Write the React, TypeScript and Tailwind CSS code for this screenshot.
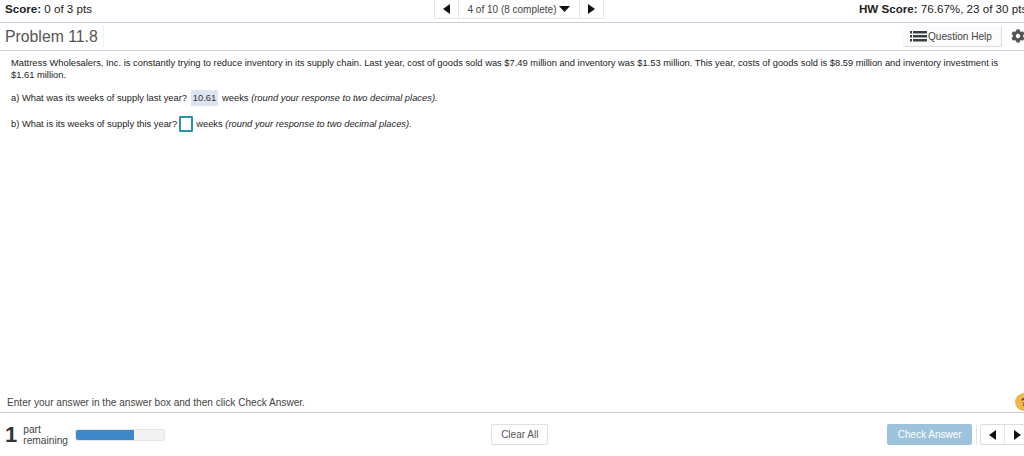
import { FaCog } from "react-icons/fa";

const font = { fontFamily: '"Liberation Sans", Arial, sans-serif' };

const Left = () => (
  <svg width="9" height="10" viewBox="0 0 9 10" className="block">
    <path d="M8 0v10L1 5z" fill="#111" />
  </svg>
);

const Right = () => (
  <svg width="9" height="10" viewBox="0 0 9 10" className="block">
    <path d="M1 0v10l7-5z" fill="#111" />
  </svg>
);

const ListIcon = () => (
  <svg width="17" height="11" viewBox="0 0 17 11" className="block shrink-0">
    <path
      d="M0 0h2v2.6H0zM3 0h14v2.6H3zM0 4h2v2.6H0zM3 4h14v2.6H3zM0 8h2v2.6H0zM3 8h14v2.6H3z"
      fill="#3a3f45"
    />
  </svg>
);

export default function App() {
  return (
    <div
      className="flex flex-col h-[456px] w-[1024px] overflow-hidden bg-white text-[#222]"
      style={font}
    >
      {/* top bar */}
      <div className="flex h-[23px] shrink-0 border-b border-[#c9d1de]">
        <div className="w-[434px] shrink-0 pl-[5px] pt-[2px] text-[11.6px] leading-[14px] text-[#222]">
          <b>Score:</b> 0 of 3 pts
        </div>
        <div className="flex h-[19px] w-[170px] shrink-0 rounded-b-[2px] border-x border-b border-[#e6e6e6]">
          <div className="flex w-[24px] items-center justify-center border-r border-[#e6e6e6]">
            <Left />
          </div>
          <div className="flex flex-1 items-center justify-center gap-[3px] whitespace-nowrap text-[10px] text-[#444]">
            4 of 10 (8 complete)
            <svg width="11" height="6" viewBox="0 0 11 6" className="block">
              <path d="M0 0h11L5.5 6z" fill="#111" />
            </svg>
          </div>
          <div className="flex w-[24px] items-center justify-center border-l border-[#e6e6e6]">
            <Right />
          </div>
        </div>
        <div className="ml-[255px] shrink-0 whitespace-nowrap pt-[2px] text-[11.6px] leading-[14px]">
          <b>HW Score:</b> 76.67%, 23 of 30 pts
        </div>
      </div>

      {/* problem title */}
      <div className="flex h-[28px] shrink-0 items-center border-b border-[#c9d1de]">
        <div className="flex h-full w-[104px] items-center border-r border-[#f3f3f3] pl-[5px] text-[15.8px] text-[#555]">
          Problem 11.8
        </div>
        <div className="ml-auto flex items-center">
          <div className="flex h-[21px] w-[99px] items-center gap-[1px] whitespace-nowrap rounded-[2px] border-r border-b border-[#dcdcdc] bg-[#fafafa] pl-[7px] pt-[1px] text-[10.1px] text-[#444]">
            <ListIcon />
            Question Help
          </div>
          <FaCog className="mb-[2px] ml-[9px] mr-[-1px] text-[14px] text-[#555]" />
        </div>
      </div>

      {/* question */}
      <div className="flex-1 pl-[11px] pr-[22px] pt-[6px] text-[9.35px] text-[#222]">
        <p className="leading-[12px]">
          Mattress Wholesalers, Inc. is constantly trying to reduce inventory in its supply chain. Last year, cost of goods sold was $7.49 million and inventory was $1.53 million. This year, costs of goods sold is $8.59 million and inventory investment is $1.61 million.
        </p>
        <div className="mt-[9px] flex h-[16px] items-center">
          a) What was its weeks of supply last year?
          <span className="mx-[4px] flex h-[16px] w-[27px] items-center justify-center bg-[#dce4f0] text-[#333]">10.61</span>
          weeks&nbsp;<i>(round your response to two decimal places).</i>
        </div>
        <div className="mt-[10px] flex h-[16px] items-center">
          b) What is its weeks of supply this year?
          <span className="ml-[2px] mr-[3px] h-[16px] w-[14px] rounded-[1px] border-2 border-[#2f8fb0]" />
          weeks&nbsp;<i>(round your response to two decimal places).</i>
        </div>
      </div>

      {/* hint */}
      <div className="relative flex h-[23px] shrink-0 items-center border-b border-[#c9ccd4] pl-[7px] pt-[3px] text-[10.1px] text-[#444]">
        Enter your answer in the answer box and then click Check Answer.
        <span className="absolute left-[1015px] top-[3px] flex h-[18px] w-[18px] items-center justify-center rounded-full bg-[#eeb64f] text-[11px] font-bold text-[#333]">
          ?
        </span>
      </div>

      {/* footer */}
      <div className="flex h-[43px] shrink-0 items-center">
        <span className="ml-[5px] text-[22px] font-bold text-[#333]">1</span>
        <div className="ml-[6px] w-[46px] shrink-0 text-[10.2px] leading-[11px] text-[#444]">
          part
          <br />
          remaining
        </div>
        <div className="ml-[6px] h-[12px] w-[90px] shrink-0 rounded-[2px] border border-[#e6e6e6] bg-[#f2f2f2]">
          <div className="h-full w-[58px] rounded-l-[2px] bg-[#3d88c8]" />
        </div>
        <div className="ml-[326px] flex h-[21px] w-[57px] shrink-0 items-center justify-center rounded-[2px] border border-[#e0e0e0] text-[10px] text-[#555]">
          Clear All
        </div>
        <div className="ml-[339px] flex h-[21px] w-[85px] shrink-0 items-center justify-center rounded-[2px] bg-[#9dc2dc] text-[10px] text-white">
          Check Answer
        </div>
        <div className="ml-[4px] h-[21px] w-[1px] shrink-0 bg-[#e6e6e6]" />
        <div className="ml-[3px] flex h-[21px] w-[50px] shrink-0 rounded-[2px] border border-[#dcdcdc]">
          <div className="flex w-[24px] shrink-0 items-center justify-center border-r border-[#e6e6e6]">
            <Left />
          </div>
          <div className="flex w-[24px] shrink-0 items-center justify-center">
            <Right />
          </div>
        </div>
      </div>
    </div>
  );
}
